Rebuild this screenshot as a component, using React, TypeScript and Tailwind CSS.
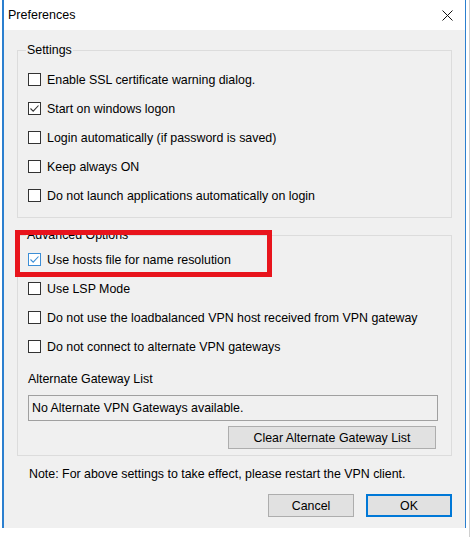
import React from 'react';

const font = { fontFamily: '"Liberation Sans", Arial, sans-serif' };

const Check = ({ checked, focus }: { checked?: boolean; focus?: boolean }) => (
  <span
    className={`flex h-[13px] w-[13px] shrink-0 items-center justify-center border bg-white ${
      focus ? 'border-[#3c8ed6]' : 'border-[#333333]'
    }`}
  >
    {checked && (
      <svg width="11" height="11" viewBox="0 0 11 11">
        <path d="M1.5 5.5 L4.2 8.2 L9.5 2.5" fill="none" stroke={focus ? '#3c8ed6' : '#333333'} strokeWidth="1.1" />
      </svg>
    )}
  </span>
);

const Row = ({ label, checked, focus }: { label: string; checked?: boolean; focus?: boolean }) => (
  <div className="flex h-[29px] items-center gap-[6px]">
    <Check checked={checked} focus={focus} />
    <span>{label}</span>
  </div>
);

const settings = [
  { label: 'Enable SSL certificate warning dialog.' },
  { label: 'Start on windows logon', checked: true },
  { label: 'Login automatically (if password is saved)' },
  { label: 'Keep always ON' },
  { label: 'Do not launch applications automatically on login' },
];

export default function App() {
  return (
    <div className="flex h-[537px] w-[474px] bg-white text-[12.4px] leading-[16px] text-black" style={font}>
      <div className="relative ml-[2px] flex h-[528px] w-[464px] flex-col border-l-2 border-r border-[#2b7fcf] bg-[#f0f0f0]">
        {/* title bar */}
        <div className="flex h-[30px] items-center justify-between bg-white pl-[4px] pr-[12px]">
          <span className="text-[12.5px]">Preferences</span>
          <svg width="11" height="11" viewBox="0 0 11 11" className="mt-[1px]">
            <path d="M0.5 0.5 L10.5 10.5 M10.5 0.5 L0.5 10.5" stroke="#111" strokeWidth="1" />
          </svg>
        </div>

        <fieldset className="mx-[13px] mt-[12px] border border-[#dcdcdc] pb-[7px] pl-[10px] pt-[7px]">
          <legend className="-ml-[2px] px-[1px]">Settings</legend>
          {settings.map((s) => (
            <Row key={s.label} label={s.label} checked={s.checked} />
          ))}
        </fieldset>

        <fieldset className="mx-[13px] mt-[9px] border border-[#dcdcdc] pb-[6px] pl-[10px] pr-[13px] pt-[2px]">
          <legend className="-ml-[2px] px-[1px]">Advanced Options</legend>
          <Row label="Use hosts file for name resolution" checked focus />
          <Row label="Use LSP Mode" />
          <Row label="Do not use the loadbalanced VPN host received from VPN gateway" />
          <Row label="Do not connect to alternate VPN gateways" />
          <div className="mt-[10px] h-[16px]">Alternate Gateway List</div>
          <div className="mt-[8px] flex h-[26px] items-center border border-[#a0a0a0] bg-[#f0f0f0] px-[3px]">
            No Alternate VPN Gateways available.
          </div>
          <div className="mt-[5px] flex justify-end pr-[2px]">
            <button className="h-[23px] w-[208px] border border-[#adadad] bg-[#e1e1e1]">Clear Alternate Gateway List</button>
          </div>
        </fieldset>

        <div className="ml-[25px] mt-[10px] h-[16px]">Note: For above settings to take effect, please restart the VPN client.</div>

        <div className="mr-[13px] mt-[12px] flex justify-end gap-[12px]">
          <button className="h-[23px] w-[86px] border border-[#adadad] bg-[#e1e1e1]">Cancel</button>
          <button className="h-[23px] w-[86px] border-2 border-[#0078d7] bg-[#e1e1e1]">OK</button>
        </div>

        {/* annotation */}
        <div className="pointer-events-none absolute left-[11px] top-[230px] h-[47px] w-[257px] border-[5px] border-[#e8141c]" />
      </div>
      <div className="ml-[3px] h-full w-px bg-[#cfcfcf]" />
    </div>
  );
}
